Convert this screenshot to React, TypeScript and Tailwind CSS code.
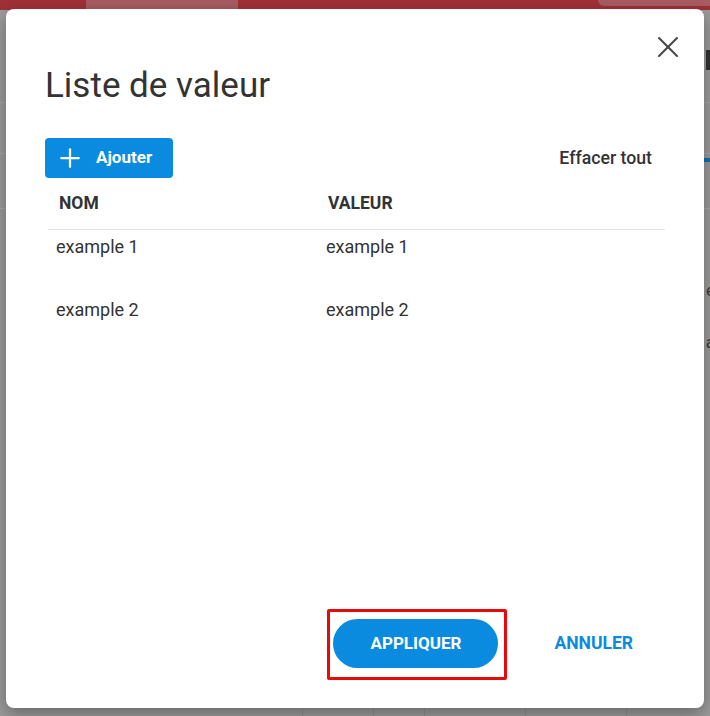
import { X, Plus } from "lucide-react";

const rows = [
  { nom: "example 1", valeur: "example 1" },
  { nom: "example 2", valeur: "example 2" },
];

function Backdrop() {
  // dimmed page that sits behind the modal
  return (
    <div className="flex h-full w-full flex-col bg-[#9c9c9c]">
      <div className="flex h-[10px] w-full bg-[#a13037]">
        <div className="ml-[86px] h-full w-[152px] bg-[#a95c61]" />
        <div className="ml-auto h-[6px] w-[112px] rounded-bl-md bg-[#a95c61]" />
      </div>
      <div className="mt-[92px] h-px w-full bg-[#a9a9a9]" />
      <div className="mt-[50px] h-px w-full bg-[#a9a9a9]" />
      <div className="mt-[54px] h-px w-full bg-[#a9a9a9]" />
      <div className="mt-auto flex h-[10px] w-full">
        <div className="ml-[302px] h-full w-px bg-[#8e8e8e]" />
        <div className="ml-[70px] h-full w-px bg-[#8e8e8e]" />
        <div className="ml-[50px] h-full w-px bg-[#8e8e8e]" />
        <div className="ml-[100px] h-full w-px bg-[#8e8e8e]" />
        <div className="ml-[100px] h-full w-px bg-[#8e8e8e]" />
      </div>
    </div>
  );
}

export default function App() {
  return (
    <div
      className="relative h-[716px] w-[710px] overflow-hidden text-[#333]"
      style={{ fontFamily: "Roboto, 'Liberation Sans', sans-serif" }}
    >
      <Backdrop />

      {/* right edge peek of page content */}
      <div className="absolute right-0 top-[50px] h-[20px] w-[4px] bg-[#333]" />
      <div className="absolute right-0 top-[158px] h-[4px] w-[6px] bg-[#1a6fa8]" />
      <div className="absolute right-[-5px] top-[280px] text-[17px] leading-5 text-[#3a3a3a]">e</div>
      <div className="absolute right-[-5px] top-[332px] text-[17px] leading-5 text-[#3a3a3a]">a</div>

      {/* dialog */}
      <div className="absolute left-[6px] top-[9px] flex h-[699px] w-[698px] flex-col rounded-[8px] bg-white px-[39px] shadow-[0_6px_18px_rgba(0,0,0,0.35)]">
        <button className="absolute right-[18px] top-[20px] flex h-[36px] w-[36px] items-center justify-center text-[#4a4a4a]">
          <X className="h-[36px] w-[36px]" strokeWidth={1.4} />
        </button>

        <h2 className="pt-[57px] text-[35px] font-normal leading-[40px] text-[#333]">
          Liste de valeur
        </h2>

        <div className="mt-[32px] flex items-center justify-between">
          <button className="flex h-[40px] w-[128px] items-center gap-[11px] rounded-[4px] bg-[#0b8be0] pl-[10px] text-[17px] font-bold text-white">
            <Plus className="h-[30px] w-[30px]" strokeWidth={1.8} />
            Ajouter
          </button>
          <button className="px-[13px] text-[17.7px] font-medium text-[#333]">Effacer tout</button>
        </div>

        <div className="ml-[3px] flex flex-col">
          <div className="grid h-[52px] grid-cols-[270px_1fr] items-center border-b border-[#e3e3e3] text-[17.5px] font-bold">
            <div className="pl-[11px]">NOM</div>
            <div className="pl-[10px]">VALEUR</div>
          </div>
          {rows.map((r) => (
            <div key={r.nom} className="grid h-[63px] grid-cols-[270px_1fr] pt-[7px] text-[18px] leading-[20px]">
              <div className="pl-[8px]">{r.nom}</div>
              <div className="pl-[8px]">{r.valeur}</div>
            </div>
          ))}
        </div>

        <div className="mt-auto flex items-center justify-end gap-[24px] pb-[40px]">
          <div className="relative">
            <button className="flex h-[49px] w-[165px] items-center justify-center rounded-full bg-[#0b8be0] text-[17px] font-bold text-white">
              APPLIQUER
            </button>
            {/* highlight frame */}
            <div className="absolute -left-[6px] -top-[10px] h-[71px] w-[180px] rounded-[2px] border-[3px] border-[#e80a0a]" />
          </div>
          <button className="px-8 text-[17.5px] font-bold text-[#0b8be0]">ANNULER</button>
        </div>
      </div>
    </div>
  );
}
